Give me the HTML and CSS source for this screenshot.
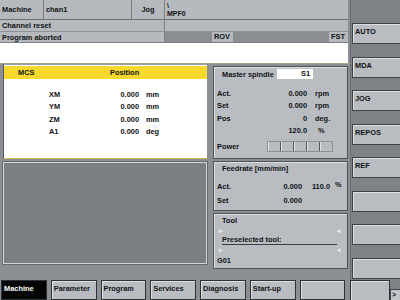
FILE: index.html
```html
<!DOCTYPE html>
<html lang="en">
<head>
  <meta charset="UTF-8">
  <meta name="viewport" content="width=device-width, initial-scale=1.0">
  <title>Machine - chan1</title>
  <link rel="stylesheet" href="styles.css">
</head>
<body>
  <div class="screen">
    <div class="work">
      <!-- Kopfzeilen -->
      <div class="head">
        <div class="row1">
          <div class="cell c-area">Machine</div>
          <div class="cell c-chan">chan1</div>
          <div class="cell c-mode">Jog</div>
          <div class="cell c-prog"><span>\</span><span>MPF0</span></div>
        </div>
        <div class="row2">
          <div class="cell c-state">Channel reset</div>
          <div class="cell c-fill"></div>
        </div>
        <div class="row3">
          <div class="cell c-state">Program aborted</div>
          <div class="cell c-flags">
            <span class="flag rov">ROV</span>
            <span class="flag fst">FST</span>
          </div>
        </div>
      </div>
      <div class="message"></div>

      <div class="main">
        <div class="col-left">
          <div class="pos-panel">
            <div class="pos-head">
              <span class="ph-mcs">MCS</span>
              <span class="ph-pos">Position</span>
            </div>
            <div class="pos-rows">
              <div class="pos-row"><span class="axis">XM</span><span class="val">0.000</span><span class="unit">mm</span></div>
              <div class="pos-row"><span class="axis">YM</span><span class="val">0.000</span><span class="unit">mm</span></div>
              <div class="pos-row"><span class="axis">ZM</span><span class="val">0.000</span><span class="unit">mm</span></div>
              <div class="pos-row"><span class="axis">A1</span><span class="val">0.000</span><span class="unit">deg</span></div>
            </div>
          </div>
          <div class="dark-panel"></div>
        </div>

        <div class="col-right">
          <div class="panel spindle">
            <div class="sp-head">
              <span class="sp-title">Master spindle</span>
              <span class="sp-name">S1</span>
            </div>
            <div class="sp-row first"><span class="lbl">Act.</span><span class="num">0.000</span><span class="unit">rpm</span></div>
            <div class="sp-row"><span class="lbl">Set</span><span class="num">0.000</span><span class="unit">rpm</span></div>
            <div class="sp-row"><span class="lbl">Pos</span><span class="num">0</span><span class="unit">deg.</span></div>
            <div class="sp-row"><span class="lbl"></span><span class="num">120.0</span><span class="unit pct">%</span></div>
            <div class="sp-row power">
              <span class="lbl">Power</span>
              <span class="bar"><i></i><i></i><i></i><i></i><i></i></span>
            </div>
          </div>

          <div class="panel feed">
            <div class="p-title">Feedrate [mm/min]</div>
            <div class="fd-row"><span class="lbl">Act.</span><span class="num">0.000</span><span class="num2">110.0</span><span class="pct">%</span></div>
            <div class="fd-row"><span class="lbl">Set</span><span class="num">0.000</span></div>
          </div>

          <div class="panel tool">
            <div class="p-title">Tool</div>
            <div class="arrows"><span>&#9656;</span><span>&#9666;</span></div>
            <div class="presel">Preselected tool:</div>
            <div class="arrows"><span>&#9656;</span><span>&#9666;</span></div>
            <div class="g-code">G01</div>
          </div>
        </div>
      </div>
    </div>

    <!-- vertikale Softkeys -->
    <div class="vkeys">
      <div class="key">AUTO</div>
      <div class="key">MDA</div>
      <div class="key">JOG</div>
      <div class="key">REPOS</div>
      <div class="key">REF</div>
      <div class="key"></div>
      <div class="key"></div>
      <div class="key"></div>
    </div>

    <!-- horizontale Softkeys -->
    <div class="hkeys">
      <div class="hkey active">Machine</div>
      <div class="hkey">Parameter</div>
      <div class="hkey">Program</div>
      <div class="hkey">Services</div>
      <div class="hkey">Diagnosis</div>
      <div class="hkey">Start-up</div>
      <div class="hkey"></div>
      <div class="hkey last"></div>
      <div class="more"><span>&gt;</span></div>
    </div>
  </div>
</body>
</html>
```

FILE: styles.css
```css
body {
  margin: 0;
  padding: 0;
  font-family: "Liberation Sans", Arial, sans-serif;
  font-weight: bold;
  font-size: 7.4px;
  color: #101214;
  background-color: #8b8f93;
}

.screen {
  width: 400px;
  height: 300px;
  display: grid;
  grid-template-columns: 350px 50px;
  grid-template-rows: 280px 20px;
  overflow: hidden;
}

.work {
  display: flex;
  flex-direction: column;
}

/* Kopfzeilen */
.head {
  width: 348px;
  background: #b6babe;
}

.row1 {
  display: flex;
  height: 19px;
  border-bottom: 1px solid #6e7276;
}

.row2 {
  display: flex;
  height: 11px;
  border-bottom: 1px solid #8e9296;
}

.row3 {
  display: flex;
  height: 10px;
  border-bottom: 1px solid #7a7e82;
}

.cell {
  display: flex;
  align-items: center;
  padding-left: 2px;
  box-sizing: border-box;
}

.c-area { width: 44px; border-right: 1px solid #7a7e82; }
.c-chan { width: 88px; border-right: 1px solid #7a7e82; }
.c-mode { width: 33px; border-right: 1px solid #7a7e82; justify-content: center; padding-left: 0; }

.c-prog {
  flex: 1;
  flex-direction: column;
  align-items: flex-start;
  justify-content: center;
  line-height: 8px;
  font-size: 7px;
}

.c-state { width: 165px; border-right: 1px solid #7a7e82; }
.c-fill { flex: 1; }

.c-flags {
  flex: 1;
  background: #8a8e92;
  padding-left: 0;
  position: relative;
}

.flag {
  position: absolute;
  top: 0;
  height: 10px;
  line-height: 10px;
  background: #b6babe;
  padding: 0 2px;
}

.rov { left: 47px; width: 17px; }
.fst { right: 0; width: 15px; }

.message {
  width: 348px;
  height: 20px;
  background: #fff;
}

/* Hauptbereich */
.main {
  flex: 1;
  display: grid;
  grid-template-columns: 210px 140px;
  border-top: 1px solid #a9a58a;
}

.col-left {
  display: flex;
  flex-direction: column;
  padding: 0 3px;
  gap: 3px;
}

.pos-panel {
  height: 95px;
  background: #fff;
  border-left: 1px solid #55595d;
  border-bottom: 1px solid #c9b44a;
  border-top: 1px solid #9a9ea2;
  box-sizing: border-box;
}

.pos-head {
  height: 13px;
  margin-top: 1px;
  background: #f6d92c;
  display: flex;
  align-items: center;
}

.ph-mcs { margin-left: 14px; width: 92px; }

.pos-rows { padding-top: 9px; }

.pos-row {
  display: flex;
  height: 12.5px;
  align-items: center;
}

.axis { width: 50px; margin-left: 45px; }
.val { width: 40px; text-align: right; }
.pos-row .unit { margin-left: 7px; }

.dark-panel {
  height: 102px;
  background: #7b7f83;
  border: 1px solid #d4d7da;
  outline: 1px solid #65696d;
  box-sizing: border-box;
}

.col-right {
  display: flex;
  flex-direction: column;
  padding: 2px 2px 0 3px;
  gap: 2px;
}

.panel {
  background: #b9bdc1;
  border: 1px solid #4e5256;
  box-shadow: inset 1px 1px 0 #dde0e3;
  box-sizing: border-box;
  padding-left: 3px;
}

.spindle { height: 93px; }
.feed { height: 50px; }
.tool { height: 56px; }

.sp-head {
  display: flex;
  align-items: center;
  height: 10px;
  margin-top: 2px;
}

.sp-title { width: 55px; margin-left: 5px; }

.sp-name {
  width: 36px;
  height: 10px;
  line-height: 10px;
  background: #fff;
  text-align: right;
  padding-right: 3px;
  box-sizing: border-box;
}

.sp-row {
  display: flex;
  height: 12.5px;
  align-items: center;
}

.sp-row.first { margin-top: 8px; }
.sp-row.power { margin-top: 3px; }

.lbl { width: 50px; }
.num { width: 40px; text-align: right; }
.sp-row .unit { margin-left: 8px; }
.sp-row .pct { margin-left: 11px; }

.bar {
  display: flex;
  height: 11px;
  border: 1px solid #8c9094;
  box-sizing: border-box;
}

.bar i {
  width: 12px;
  border-right: 1px solid #55595d;
  box-shadow: inset 1px 0 0 #e2e4e6;
}

.bar i:last-child { border-right: none; }

.p-title {
  margin-left: 5px;
  height: 10px;
  line-height: 10px;
  margin-top: 2px;
}

.fd-row {
  display: flex;
  height: 14px;
  align-items: center;
}

.fd-row:nth-child(2) { margin-top: 5px; }
.fd-row .lbl { width: 45px; }
.fd-row .num { width: 40px; }
.num2 { width: 28px; text-align: right; }
.fd-row .pct { margin-left: 5px; margin-top: -4px; }

.arrows {
  display: flex;
  justify-content: space-between;
  height: 9px;
  line-height: 9px;
  padding: 0 6px 0 2px;
  color: #e6e8ea;
  font-size: 7px;
}

.presel {
  margin-left: 5px;
  margin-right: 10px;
  height: 9px;
  line-height: 9px;
  border-bottom: 1px solid #3a3e42;
}

.g-code { margin-top: 2px; }

/* Softkeys */
.vkeys {
  background: #7f8387;
  border-left: 1px solid #6a6e72;
  display: flex;
  flex-direction: column;
  gap: 12.5px;
  padding-top: 23px;
  padding-left: 1px;
}

.key {
  height: 21px;
  background: #b9bdc1;
  border: 1px solid #3e4246;
  border-right: none;
  box-shadow: inset 1px 1px 0 #dde0e3;
  box-sizing: border-box;
  padding: 3px 0 0 2px;
}

.hkeys {
  grid-column: 1 / 3;
  display: flex;
  gap: 4px;
  padding-left: 1px;
}

.hkey {
  width: 46px;
  background: #b9bdc1;
  border: 1px solid #2e3236;
  box-shadow: inset 1px 1px 0 #dde0e3;
  box-sizing: border-box;
  padding: 3px 0 0 2px;
}

.hkey.active {
  background: #050505;
  color: #fff;
  box-shadow: none;
}

.hkey.last {
  width: 40px;
  margin-left: 1px;
  border-bottom: none;
}

.more {
  width: 10px;
  margin-left: -4px;
  display: flex;
  flex-direction: column;
  justify-content: flex-end;
  background: #7f8387;
}

.more span {
  height: 10px;
  line-height: 10px;
  background: #c2c6ca;
  border-left: 1px solid #3e4246;
  border-top: 1px solid #3e4246;
  font-size: 7px;
  padding-left: 1px;
}
```
